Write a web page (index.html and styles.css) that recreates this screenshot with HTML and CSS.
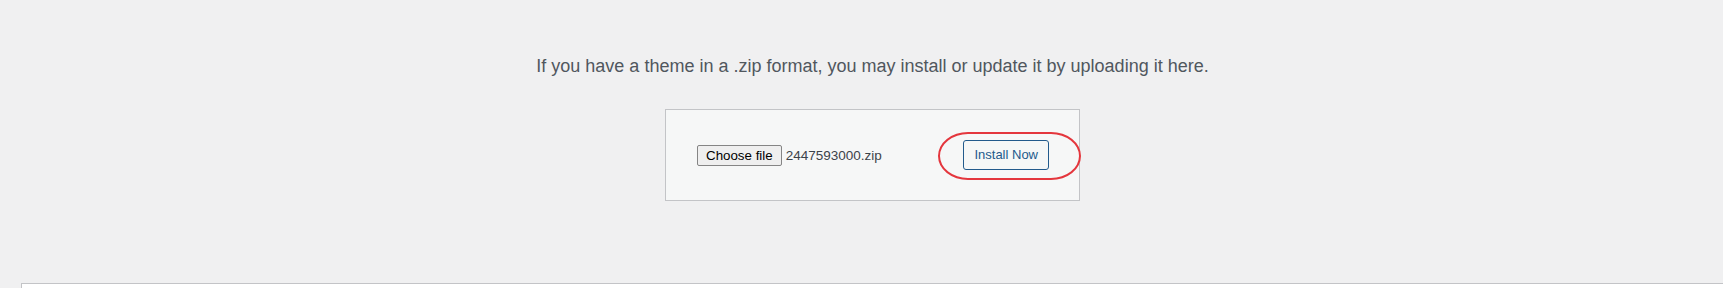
FILE: index.html
```html
<!DOCTYPE html>
<html lang="en">
<head>
    <meta charset="UTF-8">
    <meta name="viewport" content="width=device-width, initial-scale=1.0">
    <title>Upload Theme</title>
    <link rel="stylesheet" href="styles.css">
</head>
<body>
    <div class="wrap">
        <div class="upload-theme">
            <p class="install-help">If you have a theme in a .zip format, you may install or update it by uploading it here.</p>
            <form class="wp-upload-form" onsubmit="return false;">
                <div class="file-field">
                    <button type="button" class="file-btn">Choose file</button>
                    <span class="file-name">2447593000.zip</span>
                </div>
                <button type="submit" class="button">Install Now</button>
                <span class="highlight"></span>
            </form>
        </div>
        <div class="panel"></div>
    </div>
</body>
</html>
```

FILE: styles.css
```css
* {
    box-sizing: border-box;
}

body {
    margin: 0;
    background: #f0f0f1;
    color: #3c434a;
    font-family: "Liberation Sans", Arial, sans-serif;
    overflow: hidden;
}

.wrap {
    margin-left: 21px;
    width: 1703px;
}

.upload-theme {
    text-align: center;
    padding-top: 54px;
}

.install-help {
    margin: 0 0 30px;
    font-size: 18px;
    line-height: 25px;
    color: #50575e;
}

.wp-upload-form {
    position: relative;
    display: flex;
    justify-content: space-between;
    align-items: center;
    width: 415px;
    margin: 0 auto 82px;
    padding: 30px;
    background: #f6f7f7;
    border: 1px solid #c3c4c7;
}

.file-field {
    display: flex;
    align-items: center;
    margin-left: 1px;
}

.file-btn {
    height: 21px;
    padding: 0 8px;
    font-family: "Liberation Sans", Arial, sans-serif;
    font-size: 13.333px;
    color: #000;
    background: #efefef;
    border: 1px solid #858585;
    border-radius: 2px;
}

.file-name {
    margin-left: 4px;
    font-size: 13.5px;
    color: #3c434a;
}

.button {
    min-height: 30px;
    padding: 0 10px;
    font-family: "Liberation Sans", Arial, sans-serif;
    font-size: 13px;
    line-height: 28px;
    color: #235a8c;
    background: #f6f7f7;
    border: 1px solid #235a8c;
    border-radius: 3px;
    cursor: pointer;
}

.highlight {
    position: absolute;
    left: 272px;
    top: 22px;
    width: 143px;
    height: 48px;
    border: 2px solid #e4363d;
    border-radius: 30px / 24px;
    pointer-events: none;
}

.panel {
    height: 100px;
    background: #fff;
    border: 1px solid #c3c4c7;
}
```
